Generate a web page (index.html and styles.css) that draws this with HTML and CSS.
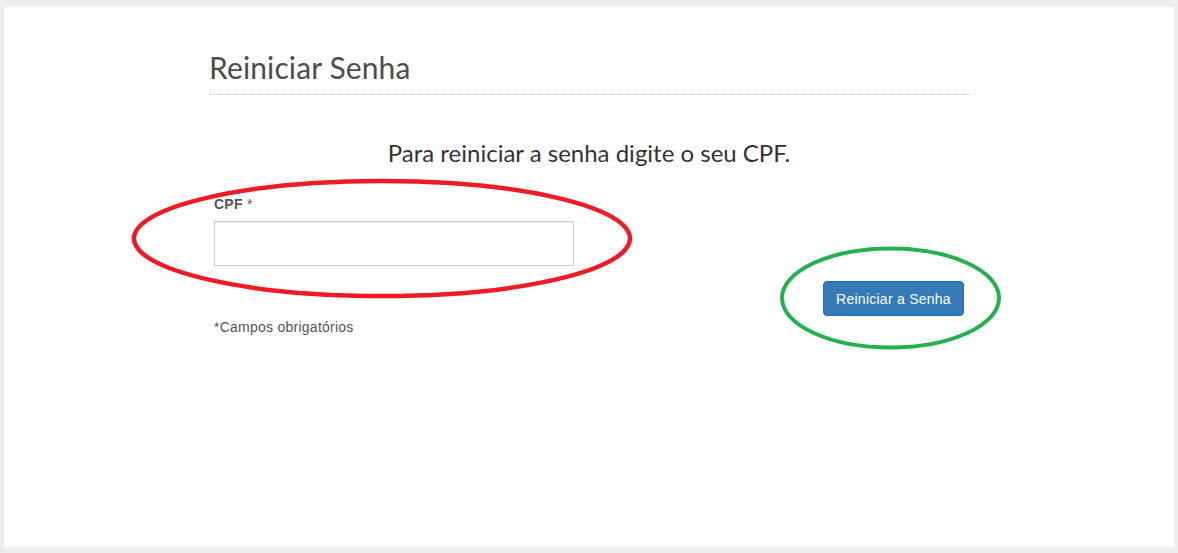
FILE: index.html
```html
<!DOCTYPE html>
<html lang="pt-BR">
<head>
<meta charset="utf-8">
<title>Reiniciar Senha</title>
<link rel="stylesheet" href="styles.css">
</head>
<body>
<div class="panel">
  <div class="container">
    <h1 class="title">Reiniciar Senha</h1>
    <p class="lead">Para reiniciar a senha digite o seu CPF.</p>
    <div class="row">
      <div class="form-col">
        <label class="field-label" for="cpf"><b>CPF</b> *</label>
        <input class="field-input" id="cpf" type="text">
        <p class="note">*Campos obrigatórios</p>
      </div>
      <div class="btn-col">
        <button class="btn-primary" type="button">Reiniciar a Senha</button>
      </div>
    </div>
  </div>
</div>
<svg class="annotations" width="1178" height="553" viewBox="0 0 1178 553">
  <ellipse cx="382" cy="238.5" rx="248" ry="57.5" fill="none" stroke="#ed1c24" stroke-width="4.5"/>
  <ellipse cx="890.5" cy="298" rx="108.5" ry="49.5" fill="none" stroke="#22b14c" stroke-width="4"/>
</svg>
</body>
</html>
```

FILE: styles.css
```css
html, body {
  margin: 0;
  padding: 0;
}
body {
  background: #eeeeee;
  padding: 7px 4px 6px 4px;
  font-family: "Liberation Sans", Arial, sans-serif;
  position: relative;
  box-sizing: border-box;
  height: 553px;
  overflow: hidden;
}
.panel {
  background: #ffffff;
  height: 540px;
  padding-top: 44px;
  box-sizing: border-box;
}
.container {
  width: 760px;
  margin: 0 auto;
}
.title {
  margin: 0;
  font-family: Lato, "Open Sans", sans-serif;
  font-weight: 400;
  font-size: 30px;
  letter-spacing: 0.12px;
  line-height: 33px;
  color: #4d4d4d;
  padding-bottom: 10px;
  border-bottom: 1px dotted #c8c8c8;
}
.lead {
  margin: 45px 0 0 0;
  text-align: center;
  font-family: Lato, "Open Sans", sans-serif;
  font-size: 24px;
  line-height: 26px;
  color: #333333;
}
.row {
  display: flex;
  justify-content: space-between;
  align-items: flex-start;
  margin-top: 28px;
}
.form-col {
  padding-left: 5px;
  display: flex;
  flex-direction: column;
  align-items: flex-start;
}
.field-label {
  font-size: 14px;
  letter-spacing: 0.25px;
  line-height: 20px;
  color: #555555;
  margin-bottom: 7px;
}
.field-label b {
  font-weight: 700;
}
.field-input {
  width: 360px;
  height: 45px;
  box-sizing: border-box;
  border: 1px solid #cccccc;
  margin: 0;
  padding: 6px 12px;
  font-size: 14px;
  background: #fff;
  box-shadow: inset 0 1px 1px rgba(0,0,0,0.075);
}
.note {
  margin: 51px 0 0 0;
  font-size: 14px;
  letter-spacing: 0.25px;
  line-height: 20px;
  color: #555555;
}
.btn-col {
  padding-right: 5px;
  padding-top: 87px;
}
.btn-primary {
  display: block;
  width: 141px;
  height: 35px;
  box-sizing: border-box;
  background: #337ab7;
  border: 1px solid #2e6da4;
  border-radius: 4px;
  color: #ffffff;
  font-family: "Liberation Sans", Arial, sans-serif;
  font-size: 14px;
  letter-spacing: 0.25px;
  padding: 0;
}
.annotations {
  position: absolute;
  top: 0;
  left: 0;
  pointer-events: none;
}
```
